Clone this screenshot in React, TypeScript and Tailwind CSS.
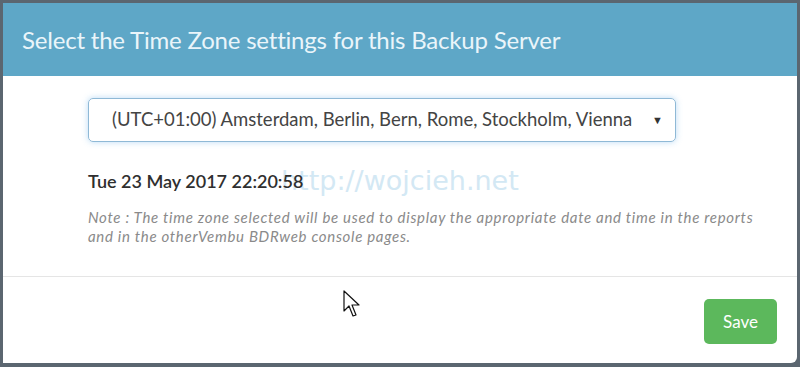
export default function App() {
  return (
    <div
      className="h-[367px] w-[800px] overflow-hidden bg-[#5b6670] pl-[3px] pr-[3px] pt-[3px] pb-[4px]"
      style={{ fontFamily: 'Lato, "Open Sans", sans-serif' }}
    >
      <div className="flex h-full flex-col overflow-hidden rounded-br-[6px] bg-white">
        {/* Header */}
        <div className="flex h-[73px] shrink-0 items-center bg-[#5ea7c7] pl-[19px]">
          <h1 className="text-[24px] font-normal tracking-[-0.2px] text-[#eaf5fa]">
            Select the Time Zone settings for this Backup Server
          </h1>
        </div>

        {/* Body */}
        <div className="relative flex h-[201px] shrink-0 flex-col border-b border-[#e5e5e5] pl-[85px] pr-[20px] pt-[22px]">
          <div className="relative flex h-[44px] w-[588px] items-center rounded-[5px] border border-[#8fb9d6] pl-[23px] pr-[12px] shadow-[0_0_6px_rgba(102,175,233,0.45)]">
            <span className="text-[18.5px] text-[#444]">
              (UTC+01:00) Amsterdam, Berlin, Bern, Rome, Stockholm, Vienna
            </span>
            <span className="ml-auto text-[11px] text-[#333]">▼</span>
          </div>

          {/* watermark, drawn under the date */}
          <span
            className="pointer-events-none absolute left-[278px] top-[85px] text-[27px] text-[#d3e8f4]"
            style={{ fontFamily: '"DejaVu Sans", sans-serif' }}
          >
            http://wojcieh.net
          </span>

          <p className="relative mt-[26px] w-fit text-[18px] font-semibold text-[#2f2f2f]">
            Tue 23 May 2017 22:20:58
          </p>

          <p className="mt-[13px] w-[684px] text-[15px] italic leading-[19px] tracking-[0.7px] text-[#8a8a8a]">
            Note : The time zone selected will be used to display the appropriate date and time in the reports and in the otherVembu BDRweb console pages.
          </p>
        </div>

        {/* Footer */}
        <div className="relative flex flex-1 items-start justify-end pr-[20px] pt-[22px]">
          <button className="h-[45px] w-[73px] rounded-[5px] bg-[#5cb85c] text-[17px] text-white">
            Save
          </button>
          <svg
            className="absolute left-[340px] top-[13px]"
            width="20"
            height="30"
            viewBox="0 0 20 30"
          >
            <path
              d="M1 1 L1 21 L6 16 L10 26 L13 25 L9 15 L16 15 Z"
              fill="white"
              stroke="#111"
              strokeWidth="1.2"
              strokeLinejoin="round"
            />
          </svg>
        </div>
      </div>
    </div>
  );
}
